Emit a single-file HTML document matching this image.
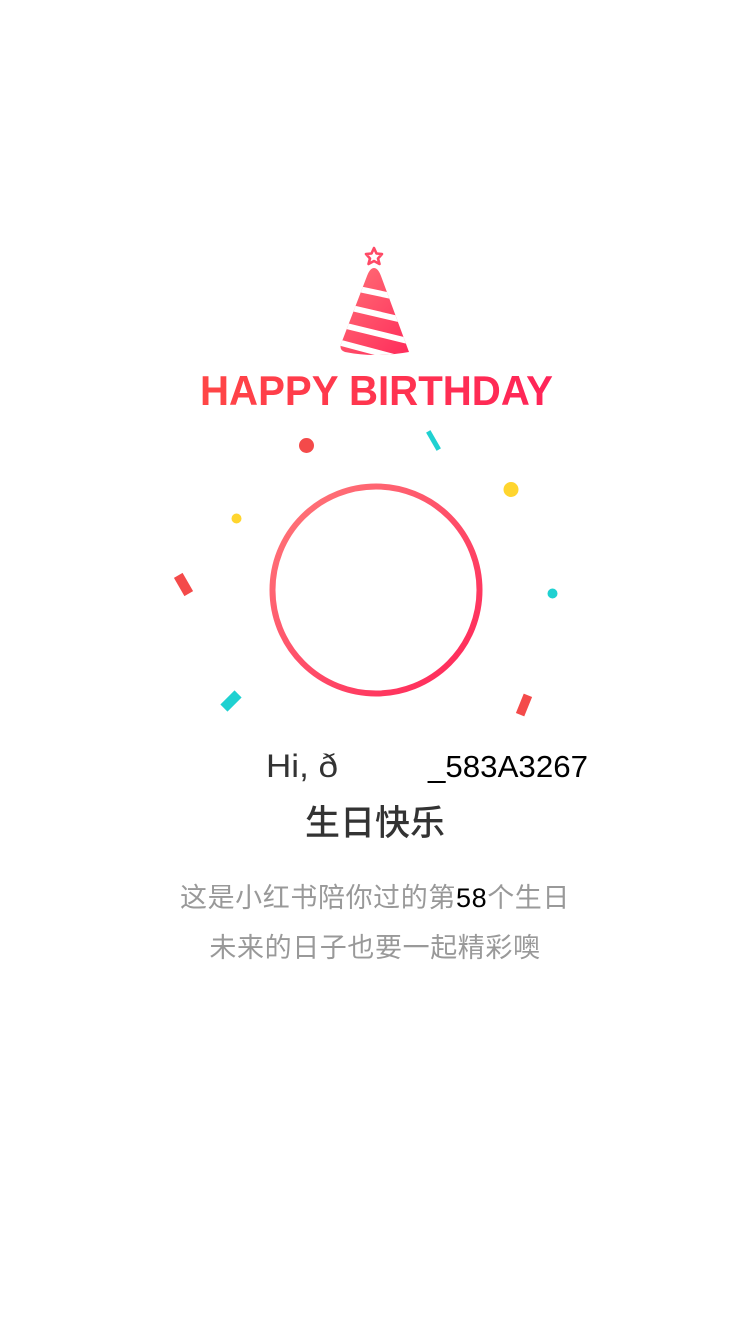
<!DOCTYPE html>
<html><head><meta charset="utf-8"><style>
html,body{margin:0;padding:0;background:#fff;width:750px;height:1334px;overflow:hidden}
.t{position:absolute;left:0;width:750px;text-align:center;font-family:"Liberation Sans","Noto Sans CJK SC",sans-serif;white-space:nowrap}
</style></head><body>
<svg width="750" height="1334" style="position:absolute;left:0;top:0">
<defs>
<linearGradient id="g" x1="0" y1="0" x2="1" y2="1"><stop offset="0" stop-color="#ff7a7a"/><stop offset="1" stop-color="#ff2458"/></linearGradient>
<linearGradient id="gt" x1="0" y1="0" x2="1" y2="0"><stop offset="0" stop-color="#ff4646"/><stop offset="1" stop-color="#ff2458"/></linearGradient>
<clipPath id="cone"><path d="M374 268 Q370 268 367 276 L341 344 Q339 350 345 352 Q375 358 409 352 L381 276 Q378 268 374 268Z"/></clipPath>
</defs>
<path d="M374 248 L376.5 253.5 L382 254 L378 258.5 L379.5 264 L374 261 L368.5 264 L370 258.5 L366 254 L371.5 253.5Z" fill="none" stroke="#ff4a66" stroke-width="2.6" stroke-linejoin="round"/>
<g clip-path="url(#cone)">
<rect x="330" y="260" width="90" height="100" fill="url(#g)"/>
<g stroke="#fff" stroke-width="6">
<line x1="330" y1="283" x2="420" y2="302"/>
<line x1="330" y1="303" x2="420" y2="324"/>
<line x1="330" y1="322" x2="420" y2="344"/>
<line x1="330" y1="340" x2="420" y2="364"/>
</g>
</g>
<text x="200" y="405" textLength="353" lengthAdjust="spacingAndGlyphs" font-family="Liberation Sans" font-weight="bold" font-size="42" fill="url(#gt)">HAPPY BIRTHDAY</text>
<circle cx="376" cy="590" r="103.5" fill="none" stroke="url(#g)" stroke-width="6"/>
<circle cx="306.5" cy="445.5" r="7.5" fill="#f44a4a"/>
<rect x="431" y="430" width="5" height="21" fill="#1fd1d1" transform="rotate(-30 433.5 440.5)"/>
<circle cx="511" cy="489.5" r="7.5" fill="#ffd52e"/>
<circle cx="236.5" cy="518.5" r="5" fill="#ffd52e"/>
<circle cx="552.5" cy="593.5" r="5" fill="#1fd1d1"/>
<rect x="178.5" y="574" width="10" height="21" fill="#f44a4a" transform="rotate(-30 183.5 584.5)"/>
<rect x="226" y="691" width="10" height="20" fill="#1fd1d1" transform="rotate(45 231 701)"/>
<rect x="519.5" y="694.5" width="9" height="21" fill="#f44a4a" transform="rotate(22 524 705)"/>
<text x="266" y="777" textLength="72" lengthAdjust="spacingAndGlyphs" font-family="Liberation Sans" font-size="32" fill="#333">Hi, ð</text>
<text x="428" y="777" textLength="160" lengthAdjust="spacingAndGlyphs" font-family="Liberation Sans" font-size="31" fill="#000">_583A3267</text>
</svg>
<div class="t" style="top:802px;font-size:35px;line-height:44px;color:#333;font-weight:500">生日快乐</div>
<div class="t" style="top:880px;font-size:27px;line-height:36px;color:#999;letter-spacing:0.6px">这是小红书陪你过的第<span style="color:#000">58</span>个生日</div>
<div class="t" style="top:930px;font-size:27px;line-height:36px;color:#999;letter-spacing:0.6px">未来的日子也要一起精彩噢</div>
</body></html>
